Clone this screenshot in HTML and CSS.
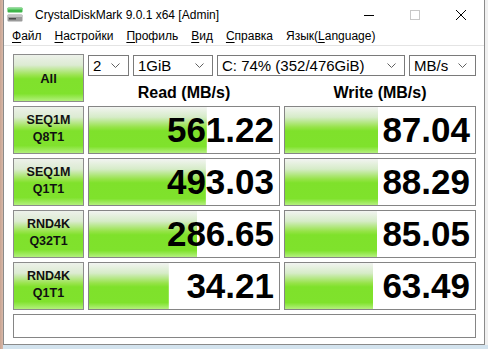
FILE: index.html
```html
<!DOCTYPE html>
<html lang="ru">
<head>
    <meta charset="UTF-8">
    <meta name="viewport" content="width=device-width, initial-scale=1.0">
    <title>CrystalDiskMark 9.0.1 x64 [Admin]</title>
    <link rel="stylesheet" href="styles.css">
</head>
<body>
    <div class="window">
        <header class="titlebar">
            <svg class="app-icon" width="16" height="15" viewBox="0 0 16 15">
                <rect x="0.5" y="0.5" width="15" height="5" rx="1" fill="#3fb54a"/>
                <rect x="0.5" y="1" width="15" height="1.5" fill="#7fd887"/>
                <rect x="0.5" y="7.5" width="15" height="7" rx="1" fill="#9a9a9a"/>
                <rect x="0.5" y="8" width="15" height="2" fill="#c4c4c4"/>
                <rect x="2" y="11" width="7" height="1.5" fill="#4a4a4a"/>
            </svg>
            <span class="title">CrystalDiskMark 9.0.1 x64 [Admin]</span>
            <div class="win-controls">
                <span class="ctl">
                    <svg width="10" height="10" viewBox="0 0 10 10"><line x1="0" y1="5.5" x2="10" y2="5.5" stroke="#000" stroke-width="1"/></svg>
                </span>
                <span class="ctl">
                    <svg width="10" height="10" viewBox="0 0 10 10"><rect x="0.5" y="0.5" width="9" height="9" fill="none" stroke="#c8c8c8" stroke-width="1"/></svg>
                </span>
                <span class="ctl">
                    <svg width="10" height="10" viewBox="0 0 10 10"><path d="M0 0L10 10M10 0L0 10" stroke="#000" stroke-width="1"/></svg>
                </span>
            </div>
        </header>

        <nav class="menubar">
            <span class="menu-item"><u>Ф</u>айл</span>
            <span class="menu-item"><u>Н</u>астройки</span>
            <span class="menu-item"><u>П</u>рофиль</span>
            <span class="menu-item"><u>В</u>ид</span>
            <span class="menu-item"><u>С</u>правка</span>
            <span class="menu-item">Язык(<u>L</u>anguage)</span>
        </nav>

        <main class="bench">
            <button class="btn btn-all">All</button>

            <div class="top-panel">
                <div class="combos">
                    <div class="combo c-count"><span>2</span><svg width="9" height="5" viewBox="0 0 9 5"><polyline points="0.5,0.5 4.5,4.5 8.5,0.5" fill="none" stroke="#606060"/></svg></div>
                    <div class="combo c-size"><span>1GiB</span><svg width="9" height="5" viewBox="0 0 9 5"><polyline points="0.5,0.5 4.5,4.5 8.5,0.5" fill="none" stroke="#606060"/></svg></div>
                    <div class="combo c-drive"><span>C: 74% (352/476GiB)</span><svg width="9" height="5" viewBox="0 0 9 5"><polyline points="0.5,0.5 4.5,4.5 8.5,0.5" fill="none" stroke="#606060"/></svg></div>
                    <div class="combo c-unit"><span>MB/s</span><svg width="9" height="5" viewBox="0 0 9 5"><polyline points="0.5,0.5 4.5,4.5 8.5,0.5" fill="none" stroke="#606060"/></svg></div>
                </div>
                <div class="heads">
                    <div class="head">Read (MB/s)</div>
                    <div class="head">Write (MB/s)</div>
                </div>
            </div>

            <button class="btn btn-test">SEQ1M<br>Q8T1</button>
            <div class="cell" style="--w: 62%">561.22</div>
            <div class="cell" style="--w: 49%">87.04</div>

            <button class="btn btn-test">SEQ1M<br>Q1T1</button>
            <div class="cell" style="--w: 61.5%">493.03</div>
            <div class="cell" style="--w: 49%">88.29</div>

            <button class="btn btn-test">RND4K<br>Q32T1</button>
            <div class="cell" style="--w: 57%">286.65</div>
            <div class="cell" style="--w: 48.5%">85.05</div>

            <button class="btn btn-test">RND4K<br>Q1T1</button>
            <div class="cell" style="--w: 42%">34.21</div>
            <div class="cell" style="--w: 46.5%">63.49</div>

            <div class="comment"></div>
        </main>
    </div>
</body>
</html>
```

FILE: styles.css
```css
body{
    margin: 0;
    width: 488px;
    height: 349px;
    overflow: hidden;
    font-family: "Liberation Sans", Arial, sans-serif;
    /* 뒤쪽 바탕화면 조각 */
    background:
        linear-gradient(to right, #c9a492 0, #d8b8a8 3px, transparent 3px),
        linear-gradient(to bottom, transparent 345px, #d3e3ee 345px),
        #f0f0f0;
}

.window{
    box-sizing: border-box;
    width: 482px;
    height: 345px;
    margin-left: 3px;
    border: 1px solid #8a8a8a;
    border-top: 0;
    background: #fff;
}

/* 타이틀바 */
.titlebar{
    display: flex;
    align-items: center;
    height: 30px;
}
.app-icon{
    margin: 0 12px 2px 3px;
}
.title{
    font-size: 12px;
    color: #000;
}
.win-controls{
    display: flex;
    margin-left: auto;
    align-self: stretch;
}
.ctl{
    display: flex;
    justify-content: center;
    align-items: center;
    width: 46px;
}

/* 메뉴바 */
.menubar{
    display: flex;
    height: 15px;
    padding-left: 2px;
    border-bottom: 1px solid #e4e4e4;
    font-size: 12px;
    line-height: 12px;
}
.menu-item{
    padding: 0 6px;
    margin-right: 1px;
}
.menu-item u{
    text-underline-offset: 2px;
}

/* 본문 그리드 */
.bench{
    display: grid;
    grid-template-columns: 71px 192px 192px;
    grid-template-rows: repeat(5, 48px) 24px;
    gap: 4px;
    padding: 8px 0 0 9px;
}

.btn{
    margin: 0;
    padding: 0;
    border: 1px solid #8c8c8c;
    font-family: inherit;
    font-weight: bold;
    color: #111;
    background: linear-gradient(#edf1ea 0%, #dcebd2 22%, #9ae44e 44%, #80e12c 52%, #80e22d 84%, #b2f07c 100%);
}
.btn-all{
    font-size: 13px;
}
.btn-test{
    font-size: 12.5px;
    line-height: 17px;
    padding-bottom: 2px;
}

.top-panel{
    grid-column: 2 / 4;
    display: flex;
    flex-direction: column;
    justify-content: space-between;
}
.combos{
    display: flex;
    gap: 4px;
    margin-top: 1px;
}
.combo{
    box-sizing: border-box;
    display: flex;
    align-items: center;
    justify-content: space-between;
    height: 21px;
    padding: 0 8px 0 4px;
    border: 1px solid #7a7a7a;
    font-size: 15px;
}
.c-count{ width: 41px; }
.c-size{ width: 80px; }
.c-drive{ width: 188px; }
.c-unit{ width: 67px; }

.heads{
    display: flex;
    gap: 4px;
}
.head{
    width: 192px;
    text-align: center;
    font-size: 16px;
    font-weight: bold;
    line-height: 18px;
}

.cell{
    display: flex;
    align-items: center;
    justify-content: flex-end;
    padding-right: 5px;
    border: 1px solid #858585;
    font-size: 35px;
    font-weight: bold;
    color: #000;
    background: #fff linear-gradient(#f2f4f1 0%, #d6ecc8 22%, #96e348 44%, #7fe12b 52%, #7fe22c 86%, #b4f07e 100%) no-repeat;
    background-size: var(--w) 100%;
}

.comment{
    grid-column: 1 / 4;
    border: 1px solid #858585;
}
```
